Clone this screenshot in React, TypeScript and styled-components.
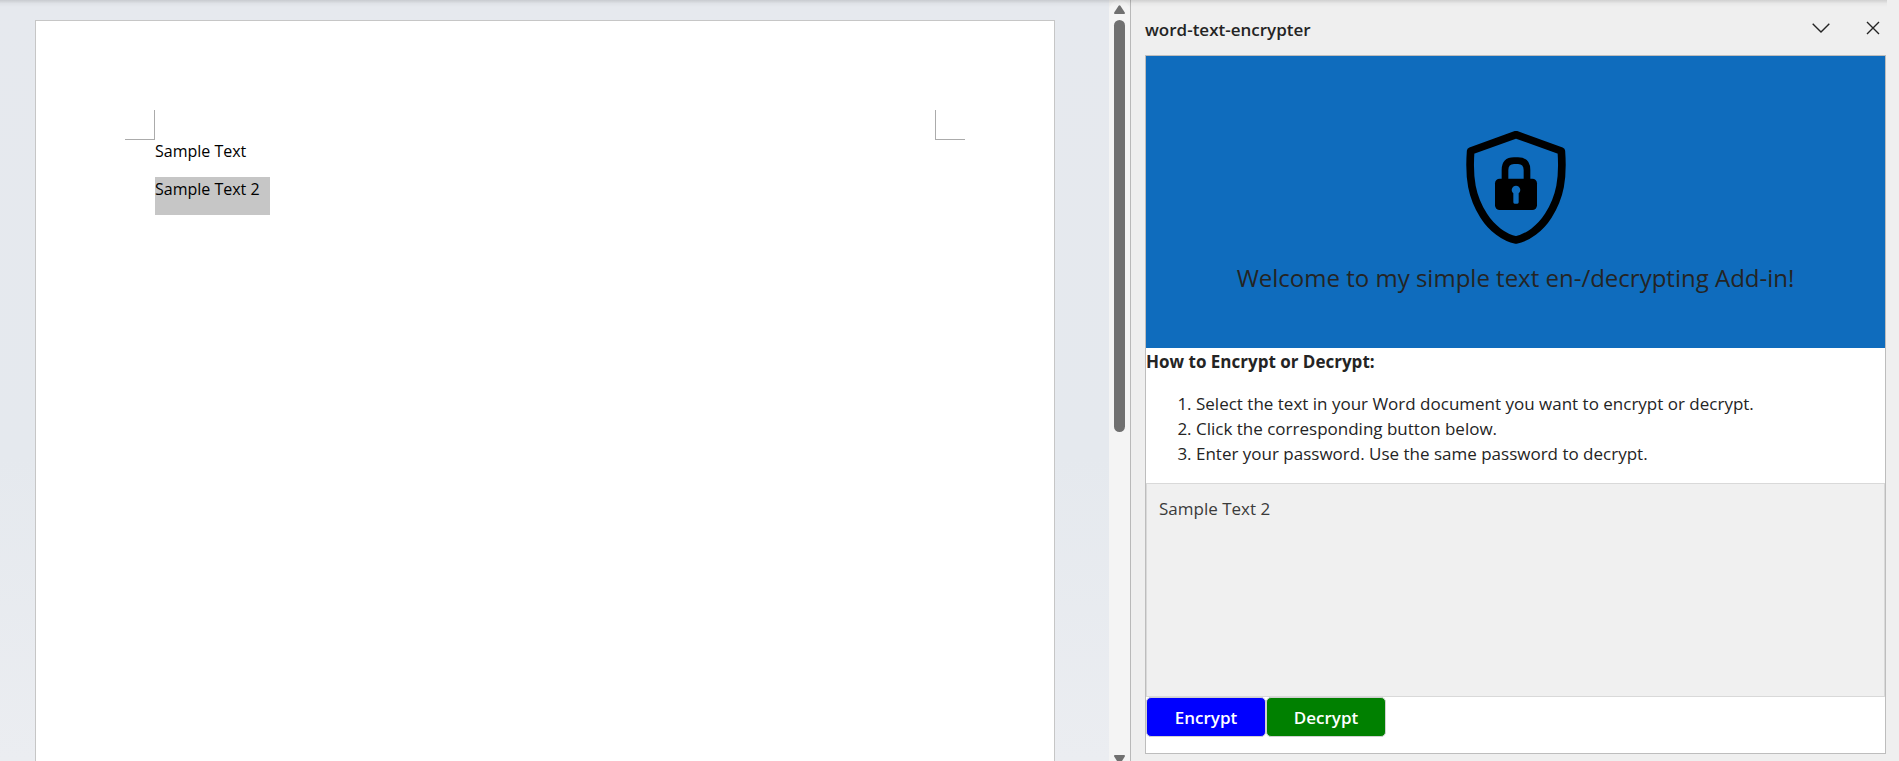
import React, { useState } from 'react';
import styled, { createGlobalStyle } from 'styled-components';

const GlobalStyle = createGlobalStyle`
  *, *::before, *::after { box-sizing: border-box; }
  body {
    margin: 0;
    font-family: 'Open Sans', 'Noto Sans', sans-serif;
    font-size: 17px;
    color: #242424;
    background: #efefef;
  }
`;

const Shell = styled.div`
  position: relative;
  display: flex;
  height: 100vh;
  overflow: hidden;
`;

const RibbonShadow = styled.div`
  position: absolute;
  inset: 0 12px auto 0;
  height: 7px;
  background: linear-gradient(rgba(0, 0, 0, 0.13), rgba(0, 0, 0, 0.03) 50%, transparent);
  pointer-events: none;
`;

const Workspace = styled.main`
  flex: 1;
  min-width: 0;
  display: flex;
  padding: 20px 54px 0 35px;
  background: linear-gradient(#e6e9ee, #e5e9ee 60%, #ebedf1);
`;

const Page = styled.article`
  flex: 1;
  min-width: 0;
  padding: 89px 89px 0;
  background: #fff;
  border: 1px solid #c6c6c6;
  border-bottom: 0;
`;

const MarginMarks = styled.div`
  display: flex;
  justify-content: space-between;
`;

const MarginMark = styled.span<{ $side: 'left' | 'right' }>`
  width: 30px;
  height: 30px;
  border-bottom: 1px solid #ababab;
  border-${({ $side }) => ($side === 'left' ? 'right' : 'left')}: 1px solid #ababab;
`;

const PageText = styled.div`
  display: flex;
  flex-direction: column;
  align-items: flex-start;
  margin: -1px 30px 0;
`;

const Paragraph = styled.p<{ $selected?: boolean }>`
  margin: 0;
  padding: 0 10px 14px 0;
  font-size: 16px;
  line-height: 24px;
  color: #000;
  background: ${({ $selected }) => ($selected ? '#c6c6c6' : 'transparent')};
`;

const ScrollTrack = styled.div`
  flex: none;
  width: 21px;
  display: flex;
  flex-direction: column;
  align-items: center;
  padding: 5px 0 0;
  background: #f4f4f4;
  border-radius: 10px 10px 0 0;
`;

const ScrollThumb = styled.div`
  flex: none;
  width: 11px;
  height: calc(54% + 4px);
  margin: 6px 0 auto;
  border-radius: 6px;
  background: #707070;
`;

const ArrowIcon = styled.svg`
  flex: none;
  width: 11px;
  height: 9px;
  fill: #707070;
`;

const DownArrowIcon = styled(ArrowIcon)`
  height: 6px;
`;

const TaskPane = styled.aside`
  flex: none;
  width: 769px;
  display: flex;
  flex-direction: column;
  padding: 0 13px 7px 14px;
  border-left: 1px solid #b9b9b9;
  background: #efefef;
`;

const PaneHeader = styled.header`
  display: flex;
  align-items: center;
  height: 55px;
  padding: 4px 1px 0 0;
`;

const PaneTitle = styled.h1`
  flex: 1;
  margin: 0;
  font-size: 17px;
  font-weight: 600;
  line-height: 24px;
`;

const IconButton = styled.button`
  display: grid;
  place-items: center;
  width: 24px;
  height: 24px;
  margin-bottom: 4px;
  padding: 0;
  border: 0;
  background: none;
  color: #242424;

  & + & { margin-left: 28px; }

  svg {
    fill: none;
    stroke: currentColor;
    stroke-width: 1.4;
  }
`;

const PaneBody = styled.section`
  flex: 1;
  display: flex;
  flex-direction: column;
  background: #fff;
  border: 1px solid #bdbdbd;
`;

const Hero = styled.div`
  display: flex;
  flex-direction: column;
  align-items: center;
  gap: 18px;
  padding: 75px 16px 54px;
  background: #0f6cbd;
`;

const HeroTitle = styled.h2`
  margin: 0;
  font-size: 24px;
  font-weight: 400;
  line-height: 32px;
`;

const GuideTitle = styled.h3`
  margin: 0;
  font-size: 17px;
  font-weight: 700;
  line-height: 27px;
`;

const Steps = styled.ol`
  margin: 16px 0 17px;
  padding-left: 50px;
  line-height: 25px;
`;

const SelectionBox = styled.textarea`
  display: block;
  width: 100%;
  height: 214px;
  padding: 13px 12px;
  border: 1px solid #d9d9d9;
  border-radius: 0;
  outline: 0;
  resize: none;
  background: #f0f0f0;
  color: #3b3b3b;
  font: inherit;
  line-height: 24px;
`;

const Actions = styled.div`
  display: flex;
`;

const ActionButton = styled.button<{ $color: string }>`
  width: 120px;
  height: 40px;
  padding: 0;
  border: 1px solid #d1d1d1;
  border-radius: 5px;
  background: ${({ $color }) => $color};
  color: #fff;
  font: inherit;
  font-weight: 600;
`;

const ShieldLock = () => (
  <svg width="100" height="113" viewBox="78 63 300 339" aria-hidden="true">
    <path
      d="M228 74 L364 123 C370 205 361 260 325 317 C301 355 263 383 228 390 C193 383 155 355 131 317 C95 260 86 205 92 123 Z"
      fill="none"
      stroke="#000"
      strokeWidth="23"
      strokeLinejoin="round"
    />
    <path d="M195 210 V180 Q195 152 222 152 H234 Q261 152 261 180 V210" fill="none" stroke="#000" strokeWidth="20" />
    <rect x="165" y="206" width="126" height="94" rx="14" />
    <path
      d="M228 227 A13 13 0 0 1 236 250 V277 Q236 281 232 281 H224 Q220 281 220 277 V250 A13 13 0 0 1 228 227 Z"
      fill="#0f6cbd"
    />
  </svg>
);

export default function App() {
  const [selection, setSelection] = useState('Sample Text 2');

  return (
    <>
      <GlobalStyle />
      <Shell>
        <Workspace>
          <Page>
            <MarginMarks>
              <MarginMark $side="left" />
              <MarginMark $side="right" />
            </MarginMarks>
            <PageText>
              <Paragraph>Sample Text</Paragraph>
              <Paragraph $selected>Sample Text 2</Paragraph>
            </PageText>
          </Page>
        </Workspace>
        <ScrollTrack>
          <ArrowIcon viewBox="0 0 11 9">
            <path d="M4.6 0.8 Q5.5 -0.4 6.4 0.8 L10.8 7.4 Q11.4 9 10 9 H1 Q-0.4 9 0.2 7.4 Z" />
          </ArrowIcon>
          <ScrollThumb />
          <DownArrowIcon viewBox="0 0 11 6">
            <path d="M1 0 H10 Q11.4 0 10.8 1.6 L8 6 H3 L0.2 1.6 Q-0.4 0 1 0 Z" />
          </DownArrowIcon>
        </ScrollTrack>
        <TaskPane>
          <PaneHeader>
            <PaneTitle>word-text-encrypter</PaneTitle>
            <IconButton type="button" aria-label="Task pane options">
              <svg width="18" height="10" viewBox="0 0 18 10">
                <path d="M0.7 0.7 L9 9 L17.3 0.7" />
              </svg>
            </IconButton>
            <IconButton type="button" aria-label="Close">
              <svg width="14" height="14" viewBox="0 0 14 14">
                <path d="M1 1 L13 13 M13 1 L1 13" />
              </svg>
            </IconButton>
          </PaneHeader>
          <PaneBody>
            <Hero>
              <ShieldLock />
              <HeroTitle>Welcome to my simple text en-/decrypting Add-in!</HeroTitle>
            </Hero>
            <GuideTitle>How to Encrypt or Decrypt:</GuideTitle>
            <Steps>
              <li>Select the text in your Word document you want to encrypt or decrypt.</li>
              <li>Click the corresponding button below.</li>
              <li>Enter your password. Use the same password to decrypt.</li>
            </Steps>
            <SelectionBox
              aria-label="Selected text"
              value={selection}
              onChange={(event) => setSelection(event.target.value)}
            />
            <Actions>
              <ActionButton type="button" $color="#0000ff">Encrypt</ActionButton>
              <ActionButton type="button" $color="#008000">Decrypt</ActionButton>
            </Actions>
          </PaneBody>
        </TaskPane>
        <RibbonShadow />
      </Shell>
    </>
  );
}
